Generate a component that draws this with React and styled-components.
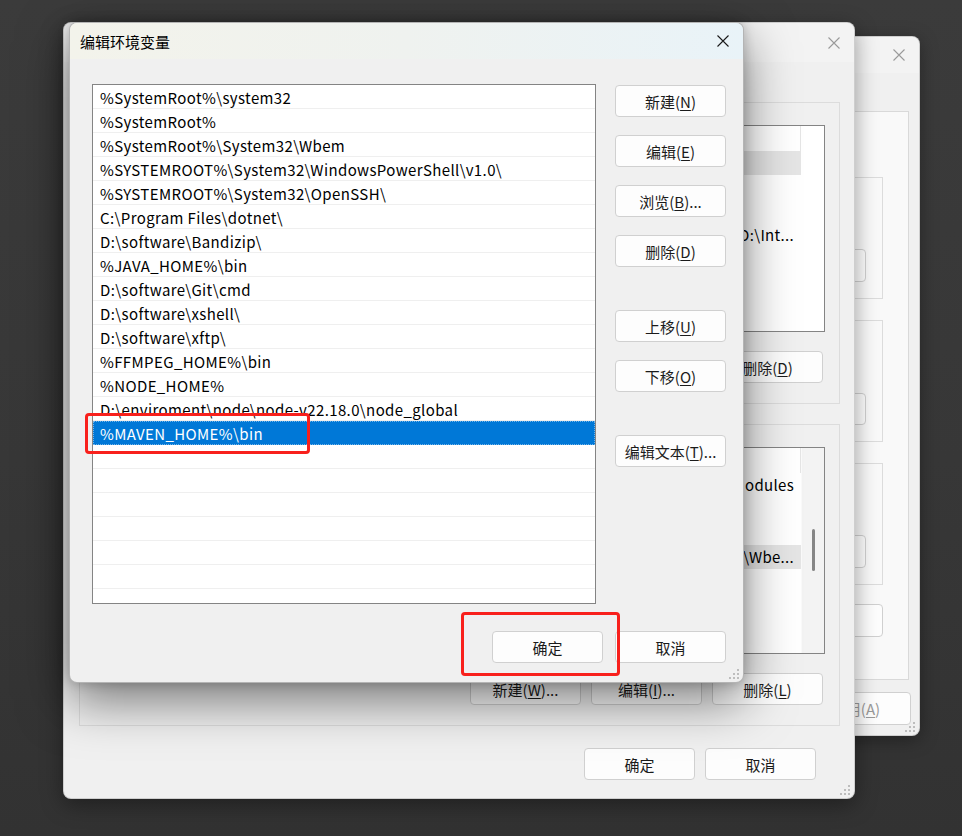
import styled, { createGlobalStyle } from "styled-components";

const GlobalStyle = createGlobalStyle`
  * { box-sizing: border-box; }
  html, body { margin: 0; padding: 0; }
  body {
    background: #363636;
    font-family: "Noto Sans CJK SC", "Noto Sans", sans-serif;
    font-size: 15px;
    color: #000;
  }
`;

const Desktop = styled.div`
  position: relative;
  width: 962px;
  height: 836px;
  overflow: hidden;
  background: linear-gradient(180deg, #3b3b3b 0%, #373737 55%, #323232 100%);
`;

// windows sit on the desktop at their own coordinates
const Window = styled.div`
  position: absolute;
  left: ${(p) => p.$left}px;
  top: ${(p) => p.$top}px;
  width: ${(p) => p.$width}px;
  height: ${(p) => p.$height}px;
  display: flex;
  flex-direction: column;
  background: #f0f0f0;
  border: 1px solid ${(p) => (p.$active ? "rgba(0,0,0,0.25)" : "rgba(0,0,0,0.14)")};
  border-radius: 8px;
  overflow: hidden;
  box-shadow: ${(p) => p.$shadow};
`;

const TitleBar = styled.div`
  flex: none;
  height: ${(p) => p.$height}px;
  display: flex;
  align-items: center;
  justify-content: space-between;
  padding: 0 14px 0 10px;
  background: ${(p) =>
    p.$active
      ? "linear-gradient(90deg, #f3f3eb 0%, #eff2ef 50%, #e9f3f8 100%)"
      : "#f3f3f3"};
`;

const Title = styled.span`
  font-size: 15px;
  color: ${(p) => (p.$active ? "#000" : "#8c8c8c")};
`;

const Button = styled.button`
  flex: none;
  width: ${(p) => p.$width ?? 111}px;
  height: ${(p) => p.$height ?? 32}px;
  margin-top: ${(p) => p.$push ?? 0}px;
  padding: 0;
  border: 1px solid #d0d0d0;
  border-radius: 4px;
  background: #fdfdfd;
  color: ${(p) => (p.$disabled ? "#9a9a9a" : "#1b1b1b")};
  font-family: inherit;
  font-size: 15px;
  line-height: 1;
  white-space: nowrap;

  u {
    text-decoration-thickness: 1px;
    text-underline-offset: 2px;
  }
`;

const ButtonRow = styled.div`
  display: flex;
  justify-content: flex-end;
  gap: ${(p) => p.$gap ?? 10}px;
  margin-top: ${(p) => p.$top ?? 0}px;
  padding-right: ${(p) => p.$right ?? 0}px;
`;

const Grip = styled.svg`
  position: absolute;
  right: 4px;
  bottom: 3px;
`;

const ResizeGrip = () => (
  <Grip width="10" height="10" viewBox="0 0 10 10">
    <g fill="#bdbdbd">
      <rect x="8" y="0" width="2" height="2" />
      <rect x="8" y="4" width="2" height="2" />
      <rect x="4" y="4" width="2" height="2" />
      <rect x="8" y="8" width="2" height="2" />
      <rect x="4" y="8" width="2" height="2" />
      <rect x="0" y="8" width="2" height="2" />
    </g>
  </Grip>
);

const CloseIcon = ({ active }) => (
  <svg width="12" height="12" viewBox="0 0 12 12">
    <path
      d="M0.5 0.5 L11.5 11.5 M11.5 0.5 L0.5 11.5"
      stroke={active ? "#1a1a1a" : "#9a9a9a"}
      strokeWidth="1.1"
      fill="none"
    />
  </svg>
);

/* ---------- back window (system properties), mostly covered ---------- */

const TabStrip = styled.div`
  flex: none;
  height: 38px;
`;

const TabPanel = styled.div`
  flex: none;
  height: 569px;
  margin: 0 10px;
  padding: 65px 25px 0;
  border: 1px solid #d9d9d9;
  background: #f9f9f9;
  display: flex;
  flex-direction: column;
  gap: 21px;
`;

const SettingsGroup = styled.div`
  height: 122px;
  border: 1px solid #dcdcdc;
  padding: 8px 16px 16px;
  display: flex;
  flex-direction: column;
  justify-content: flex-end;
`;

const SysFooter = styled.div`
  display: flex;
  justify-content: flex-end;
  gap: 10px;
  padding: 12px 8px 0 0;
`;

/* ---------- middle window (environment variables) ---------- */

const EnvBody = styled.div`
  display: flex;
  flex-direction: column;
  gap: 20px;
  padding: 40px 14px 0 15px;
`;

const VarGroup = styled.div`
  height: 302px;
  border: 1px solid #dcdcdc;
  padding: 22px 14px 20px;
  display: flex;
  flex-direction: column;
`;

const VarList = styled.div`
  height: 207px;
  border: 1px solid #848484;
  background: #fff;
  display: flex;
  overflow: hidden;
`;

const VarTable = styled.div`
  flex: 1;
  min-width: 0;
  display: flex;
  flex-direction: column;
`;

const VarHeader = styled.div`
  flex: none;
  height: 25px;
  display: grid;
  grid-template-columns: 180px 526px;
`;

const HeaderCell = styled.div`
  border-right: 1px solid #e5e5e5;
`;

const VarRow = styled.div`
  flex: none;
  height: 24px;
  display: grid;
  grid-template-columns: 180px 526px;
  background: ${(p) => (p.$selected ? "#e5e5e5" : "transparent")};
`;

const VarCell = styled.div`
  grid-column: 2;
  padding: 0 7px;
  line-height: 24px;
  font-size: 15px;
  letter-spacing: 0.3px;
  white-space: nowrap;
  text-align: right;
`;

const ScrollTrack = styled.div`
  flex: none;
  width: 23px;
  display: flex;
  justify-content: center;
  background: ${(p) => (p.$visible ? "#f3f3f3" : "#fff")};
  border-left: 1px solid ${(p) => (p.$visible ? "#fafafa" : "#fff")};
`;

const ScrollThumb = styled.div`
  width: 3px;
  height: 42px;
  margin-top: 81px;
  border-radius: 2px;
  background: #868686;
`;

const EnvFooter = styled.div`
  display: flex;
  justify-content: flex-end;
  gap: 10px;
  padding: 22px 38px 0 0;
`;

/* ---------- front dialog: 编辑环境变量 ---------- */

const EditBody = styled.div`
  display: grid;
  grid-template-columns: 504px 111px;
  column-gap: 19px;
  padding: 25px 17px 0 22px;
`;

const PathList = styled.div`
  height: 520px;
  border: 1px solid #848484;
  background: #fff;
  overflow: hidden;
`;

const PathRow = styled.div`
  height: 24px;
  padding: 1px 0 0 7px;
  display: flex;
  align-items: center;
  border-bottom: 1px solid ${(p) => (p.$selected ? "#0078d7" : "#efefef")};
  background: ${(p) => (p.$selected ? "#0078d7" : "transparent")};
  color: ${(p) => (p.$selected ? "#fff" : "#000")};
  outline: ${(p) => (p.$selected ? "1px dotted rgba(255,255,255,0.45)" : "none")};
  outline-offset: -1px;
  font-size: 15px;
  letter-spacing: 0.38px;
  white-space: nowrap;
`;

const SideButtons = styled.div`
  display: flex;
  flex-direction: column;
  gap: 18px;
  padding-top: 1px;
`;

const EditFooter = styled.div`
  display: flex;
  justify-content: flex-end;
  gap: 12px;
  padding: 27px 17px 0 0;
`;

// red marks drawn over the screenshot
const Highlight = styled.div`
  position: absolute;
  left: ${(p) => p.$left}px;
  top: ${(p) => p.$top}px;
  width: ${(p) => p.$width}px;
  height: ${(p) => p.$height}px;
  border: 3px solid #f8201c;
  border-radius: 4px;
  pointer-events: none;
`;

const paths = [
  "%SystemRoot%\\system32",
  "%SystemRoot%",
  "%SystemRoot%\\System32\\Wbem",
  "%SYSTEMROOT%\\System32\\WindowsPowerShell\\v1.0\\",
  "%SYSTEMROOT%\\System32\\OpenSSH\\",
  "C:\\Program Files\\dotnet\\",
  "D:\\software\\Bandizip\\",
  "%JAVA_HOME%\\bin",
  "D:\\software\\Git\\cmd",
  "D:\\software\\xshell\\",
  "D:\\software\\xftp\\",
  "%FFMPEG_HOME%\\bin",
  "%NODE_HOME%",
  "D:\\enviroment\\node\\node-v22.18.0\\node_global",
  "%MAVEN_HOME%\\bin",
];

// only the tail of each value shows to the right of the front dialog
const userVars = ["", "", "", "D:\\Int...", "", ""];
const systemVars = ["odules", "", "", "\\Wbe...", "", "", "", ""];

const VariableList = ({ values, selected, scroll }) => (
  <VarList>
    <VarTable>
      <VarHeader>
        <HeaderCell />
        <HeaderCell />
      </VarHeader>
      {values.map((v, i) => (
        <VarRow key={i} $selected={i === selected}>
          <VarCell>{v}</VarCell>
        </VarRow>
      ))}
    </VarTable>
    <ScrollTrack $visible={scroll}>{scroll && <ScrollThumb />}</ScrollTrack>
  </VarList>
);

const SystemPropertiesWindow = () => (
  <Window
    $left={120}
    $top={36}
    $width={800}
    $height={700}
    $shadow="0 4px 18px rgba(0,0,0,0.35)"
  >
    <TitleBar $height={36}>
      <span />
      <CloseIcon />
    </TitleBar>
    <TabStrip />
    <TabPanel>
      <SettingsGroup>
        <ButtonRow>
          <Button $height={33} />
        </ButtonRow>
      </SettingsGroup>
      <SettingsGroup>
        <ButtonRow>
          <Button />
        </ButtonRow>
      </SettingsGroup>
      <SettingsGroup>
        <ButtonRow>
          <Button $height={33} />
        </ButtonRow>
      </SettingsGroup>
      <ButtonRow $top={-2}>
        <Button $width={170} $height={33} />
      </ButtonRow>
    </TabPanel>
    <SysFooter>
      <Button $height={33} />
      <Button $height={33} />
      <Button $height={33} $disabled>
        应用(<u>A</u>)
      </Button>
    </SysFooter>
    <ResizeGrip />
  </Window>
);

const EnvironmentWindow = () => (
  <Window
    $left={63}
    $top={22}
    $width={792}
    $height={777}
    $shadow="0 6px 22px rgba(0,0,0,0.38)"
  >
    <TitleBar $height={39}>
      <span />
      <CloseIcon />
    </TitleBar>
    <EnvBody>
      <VarGroup>
        <VariableList values={userVars} selected={0} />
        <ButtonRow $top={19} $right={2}>
          <Button />
          <Button />
          <Button>
            删除(<u>D</u>)
          </Button>
        </ButtonRow>
      </VarGroup>
      <VarGroup>
        <VariableList values={systemVars} selected={3} scroll />
        <ButtonRow $top={19} $right={2}>
          <Button>
            新建(<u>W</u>)...
          </Button>
          <Button>
            编辑(<u>I</u>)...
          </Button>
          <Button>
            删除(<u>L</u>)
          </Button>
        </ButtonRow>
      </VarGroup>
    </EnvBody>
    <EnvFooter>
      <Button>确定</Button>
      <Button>取消</Button>
    </EnvFooter>
    <ResizeGrip />
  </Window>
);

const EditPathDialog = () => {
  const emptyRows = 7;
  return (
    <Window
      $active
      $left={69}
      $top={22}
      $width={675}
      $height={661}
      $shadow="0 18px 50px rgba(0,0,0,0.5), 0 0 12px rgba(0,0,0,0.2)"
    >
      <TitleBar $height={36} $active>
        <Title $active>编辑环境变量</Title>
        <CloseIcon active />
      </TitleBar>
      <EditBody>
        <PathList>
          {paths.map((p, i) => (
            <PathRow key={p} $selected={i === paths.length - 1}>
              {p}
            </PathRow>
          ))}
          {Array.from({ length: emptyRows }).map((_, i) => (
            <PathRow key={"empty" + i} />
          ))}
        </PathList>
        <SideButtons>
          <Button>
            新建(<u>N</u>)
          </Button>
          <Button>
            编辑(<u>E</u>)
          </Button>
          <Button>
            浏览(<u>B</u>)...
          </Button>
          <Button>
            删除(<u>D</u>)
          </Button>
          <Button $push={25}>
            上移(<u>U</u>)
          </Button>
          <Button>
            下移(<u>O</u>)
          </Button>
          <Button $push={25}>
            编辑文本(<u>T</u>)...
          </Button>
        </SideButtons>
      </EditBody>
      <EditFooter>
        <Button>确定</Button>
        <Button>取消</Button>
      </EditFooter>
      <ResizeGrip />
    </Window>
  );
};

const App = () => {
  return (
    <>
      <GlobalStyle />
      <Desktop>
        <SystemPropertiesWindow />
        <EnvironmentWindow />
        <EditPathDialog />
        <Highlight $left={85} $top={413} $width={225} $height={41} />
        <Highlight $left={461} $top={612} $width={159} $height={64} />
      </Desktop>
    </>
  );
};

export default App;
